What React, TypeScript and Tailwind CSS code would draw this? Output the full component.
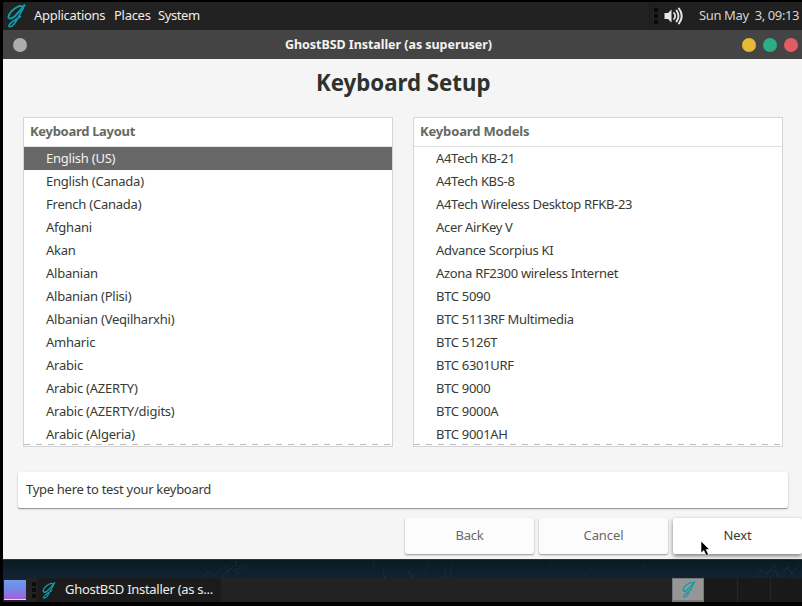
import React from "react";

const layouts = [
  "English (US)", "English (Canada)", "French (Canada)", "Afghani", "Akan", "Albanian", "Albanian (Plisi)",
  "Albanian (Veqilharxhi)", "Amharic", "Arabic", "Arabic (AZERTY)", "Arabic (AZERTY/digits)", "Arabic (Algeria)",
];
const models = [
  "A4Tech KB-21", "A4Tech KBS-8", "A4Tech Wireless Desktop RFKB-23", "Acer AirKey V", "Advance Scorpius KI",
  "Azona RF2300 wireless Internet", "BTC 5090", "BTC 5113RF Multimedia", "BTC 5126T", "BTC 6301URF", "BTC 9000",
  "BTC 9000A", "BTC 9001AH",
];

function Ghost({ className }: { className: string }) {
  return (
    <svg viewBox="0 0 20 24" className={className} fill="none" stroke="#109dac" strokeLinecap="round" strokeLinejoin="round">
      <path d="M16.500 5.500C17.500 2 14.500 1.200 11.500 2.800C7 5 3 9.500 2.500 12.500C2.300 15.500 6 15 9 12C12.500 8.500 15.500 5 18.500 1.200" strokeWidth="1.900" />
      <path d="M18.500 1.200C16 6 12 15 8.500 19.500C6 22.800 3.300 23.500 2.800 22C2.800 20 8.500 16 14.500 12.500" strokeWidth="1.600" />
    </svg>
  );
}

function Grip({ className }: { className: string }) {
  return (
    <div className={`flex shrink-0 flex-col gap-[2px] ${className}`}>
      <i className="size-1 bg-[#0b0b0b]" />
      <i className="size-1 bg-[#0b0b0b]" />
      <i className="size-1 bg-[#0b0b0b]" />
    </div>
  );
}

function List({ title, items, selected, tracking, titleTracking }: {
  title: string;
  items: string[];
  selected?: number;
  tracking: string;
  titleTracking: string;
}) {
  return (
    <section className="relative h-[330px] w-[370px] border border-[#d5d5d5] bg-white">
      <h2 className={`h-[29px] border-b border-[#e2e2e2] pl-[6px] leading-[27px] font-bold text-[#66695f] ${titleTracking}`}>{title}</h2>
      <ul className={tracking}>
        {items.map((item, i) => (
          <li key={item} className={`h-[23px] pl-[22px] leading-[23px] ${i === selected ? "bg-[#686868] text-[#f2f2ec]" : ""}`}>
            {item}
          </li>
        ))}
      </ul>
      <div className="absolute inset-x-0 bottom-[1px] h-px bg-[repeating-linear-gradient(90deg,#bcbcbc_0_6px,#ffffff_6px_12px)]" />
    </section>
  );
}

export default function App() {
  return (
    <div className="flex h-[606px] w-[802px] flex-col overflow-hidden bg-black pt-[2px] pl-[3px] font-['Noto_Sans',sans-serif] text-[13px] tracking-[-0.29px] whitespace-pre text-[#373b35]">
      <header className="flex h-7 shrink-0 items-center bg-[#222222] text-[#eeeeea]">
        <Ghost className="ml-[3px] h-6 w-5" />
        <nav className="ml-2 flex gap-2 pb-[2px] leading-[26px]">
          <span className="w-[72px]">Applications</span>
          <span className="w-9">Places</span>
          <span className="tracking-[-0.4px]">System</span>
        </nav>
        <div className="ml-auto flex h-7 w-[153px] items-center border-l border-[#1a1a1a] bg-[#202020]">
          <Grip className="ml-1" />
          <svg viewBox="0 0 20 20" className="ml-[6px] size-5" fill="none" stroke="#e4e4e4" strokeLinecap="round">
            <path d="M0.500 7H4L7.500 3.500V16.500L4 13H0.500Z" fill="#e8e8e8" stroke="none" />
            <path d="M10 7Q12.500 10 10 13" strokeWidth="1.800" />
            <path d="M12.500 4.500Q16.500 10 12.500 15.500" strokeWidth="1.900" />
            <path d="M15 2.500Q20.500 10 15 17.500" strokeWidth="2" />
          </svg>
          <span className="ml-[15px] pb-[2px] leading-[26px] tracking-[-0.38px] text-[#d5d5cf]">Sun May  3, 09:13</span>
        </div>
      </header>

      <div className="flex h-[29px] shrink-0 items-center bg-[#444444]">
        <i className="ml-[10px] size-[14px] rounded-full bg-[#adadad]" />
        <span className="ml-[258px] w-[210px] pt-px text-[12.500px] font-bold tracking-[-0.050px] text-[#f3f3ee]">GhostBSD Installer (as superuser)</span>
        <div className="mr-1 ml-auto flex gap-[7px]">
          <i className="size-[14px] rounded-full bg-[#e6b936]" />
          <i className="size-[14px] rounded-full bg-[#2eab87]" />
          <i className="size-[14px] rounded-full bg-[#e25d61]" />
        </div>
      </div>

      <main className="flex h-[500px] shrink-0 flex-col bg-[#f5f5f5]">
        <h1 className="ml-[313px] h-[58px] origin-left scale-x-[0.926] text-[24px] leading-[46px] font-bold tracking-normal text-[#2d322f]">Keyboard Setup</h1>
        <div className="ml-5 flex gap-5">
          <List title="Keyboard Layout" items={layouts} selected={0} tracking="tracking-[-0.23px]" titleTracking="tracking-[-0.3px]" />
          <List title="Keyboard Models" items={models} tracking="tracking-[-0.31px]" titleTracking="tracking-[-0.15px]" />
        </div>
        <div className="mt-[25px] ml-[15px] h-9 w-[770px] shrink-0 rounded-[2px] bg-white pl-2 leading-[35px] shadow-[0_1px_1px_#00000055,0_1px_3px_#00000022]">
          Type here to test your keyboard
        </div>
        <div className="mt-[10px] ml-[402px] flex gap-[5px] text-center leading-[34px]">
          <button className="h-9 w-[129px] shrink-0 rounded-[2px] bg-[#fcfcfc] pb-[2px] text-[#686b65] shadow-[0_1px_2px_#00000065]">Back</button>
          <button className="h-9 w-[129px] shrink-0 rounded-[2px] bg-[#fcfcfc] pb-[2px] tracking-[-0.1px] text-[#686b65] shadow-[0_1px_2px_#00000065]">Cancel</button>
          <button className="relative h-9 w-[129px] shrink-0 rounded-[2px] bg-white pb-[2px] tracking-[-0.1px] shadow-[0_2px_4px_#00000080]">
            Next
            <svg viewBox="0 0 12 18" className="absolute top-[22px] left-[27px] h-[18px] w-3">
              <path d="M1 1V13L3.800 10.500L6.200 15.500L8.500 14.500L6.200 9.500H9.500Z" fill="#000" stroke="#fff" strokeWidth="0.600" />
            </svg>
          </button>
        </div>
      </main>

      <div className="h-[19px] shrink-0 border-t border-[#303234] bg-linear-to-b from-[#0b1a20] to-[#102334]">
        <svg viewBox="0 0 799 18" className="h-[18px] w-[799px]" fill="none" stroke="#83938f" strokeWidth="0.600" strokeDasharray="2 1.500" opacity="0.25">
          <path d="M198 18L205 12L212 15L222 6L225 13L233 1L234 11L240 3M218 18L228 8L235 14L246 5M370 7L372 1M382 18L380 8M409 18L405 11L412 17M422 14L426 2M442 18V7M447 17L449 5M546 4L552 9M580 15L590 8M639 8L642 4M754 18L758 10L764 14L772 4L774 16L785 6L789 14L796 3M762 17L768 9L778 17L784 8L793 18" />
        </svg>
      </div>

      <footer className="flex h-6 shrink-0 items-center bg-[#222222] text-[#eeeeea]">
        <div className="ml-[1px] h-5 w-[22px] shrink-0 border-b border-[#dedee8] bg-linear-to-b from-[#6c9df0] via-[#7285e6] to-[#a65bd8]" />
        <Grip className="ml-[6px]" />
        <div className="ml-[1px] flex h-6 w-[184px] items-center bg-[#1b1b1b]">
          <Ghost className="ml-1 h-[17px] w-[15px]" />
          <span className="ml-[9px] pb-[2px] leading-[22px]">GhostBSD Installer (as s...</span>
        </div>
        <div className="ml-auto flex h-6">
          <div className="flex w-8 items-center justify-center border border-b-2 border-[#777] bg-[#969696]">
            <Ghost className="h-[17px] w-[15px]" />
          </div>
          <div className="w-[34px] border-r border-[#272727] bg-[#191919]" />
          <div className="w-[33px] border-r border-[#272727] bg-[#191919]" />
          <div className="w-[31px] bg-[#191919]" />
        </div>
      </footer>
    </div>
  );
}
